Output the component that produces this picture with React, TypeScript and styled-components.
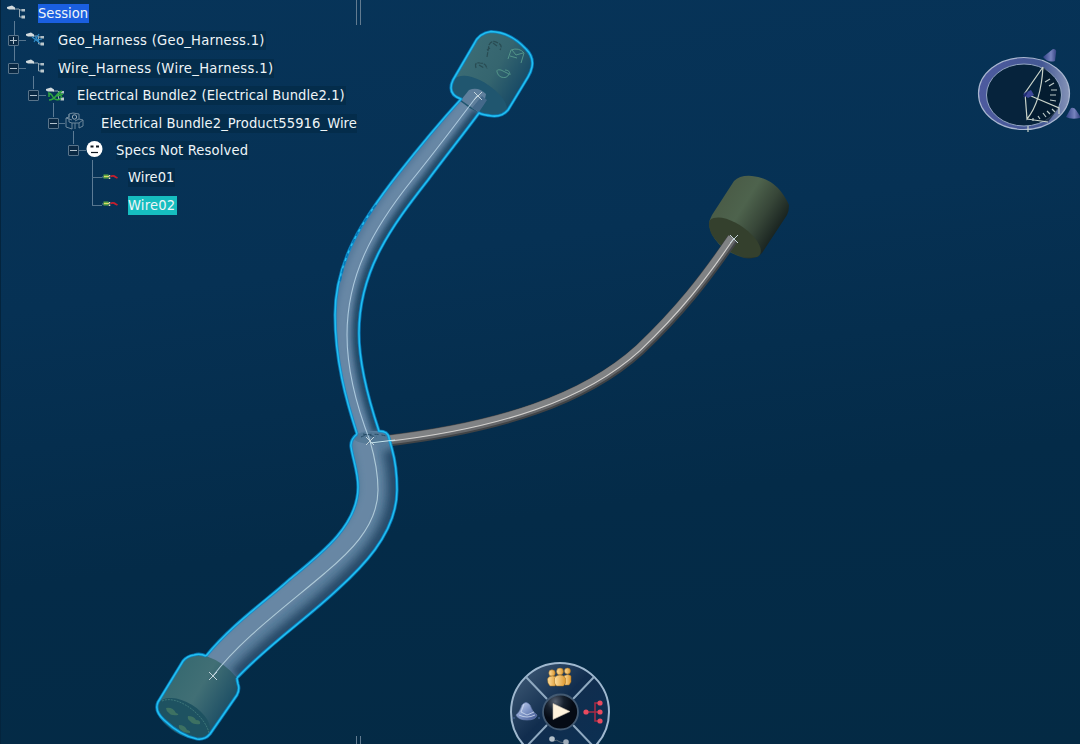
import React from "react";
import styled, { createGlobalStyle } from "styled-components";

const GlobalStyle = createGlobalStyle`
  body { margin: 0; background: #052c4a; overflow: hidden; }
`;

const Workspace = styled.main`
  position: relative;
  width: 1080px;
  height: 744px;
  overflow: hidden;
  background: linear-gradient(172deg, #073459 0%, #063154 35%, #042b48 66%, #042a44 100%);
  box-shadow: inset 1px 0 #04243d;
`;

const Scene = styled.svg`
  position: absolute;
  inset: 0;
  width: 1080px;
  height: 744px;
`;

const Tree = styled.ul`
  position: relative;
  width: 357px;
  margin: 0;
  padding: 0;
  list-style: none;
  overflow: hidden;
  font-family: "DejaVu Sans Condensed", "DejaVu Sans", sans-serif;
  font-stretch: condensed;
  font-size: 14.6px;
  color: #eef5f8;
`;

const Row = styled.li<{ $indent: number; $h: number }>`
  position: relative;
  display: flex;
  align-items: center;
  height: ${(p) => p.$h}px;
  padding-left: ${(p) => p.$indent}px;
  white-space: nowrap;
`;

const Toggle = styled.span`
  flex: none;
  box-sizing: border-box;
  display: grid;
  place-items: center;
  width: 11px;
  height: 11px;
  border: 1px solid #59748a;
  border-radius: 1px;
  background: #0a2944;
  svg { display: block; }
`;

const Dash = styled.span<{ $w: number }>`
  flex: none;
  width: ${(p) => p.$w}px;
  height: 1px;
  background: #55748d;
`;

const Stem = styled.span<{ $x: number; $top: number; $len: number }>`
  position: absolute;
  left: ${(p) => p.$x}px;
  top: ${(p) => p.$top}px;
  width: 1px;
  height: ${(p) => p.$len}px;
  background: #5c7b95;
`;

const IconSlot = styled.span<{ $gap: number }>`
  flex: none;
  display: flex;
  margin-right: ${(p) => p.$gap}px;
  svg { display: block; overflow: visible; }
`;

const Label = styled.span<{ $bg?: string; $w: number; $track: number }>`
  flex: none;
  box-sizing: border-box;
  width: ${(p) => p.$w}px;
  height: 19px;
  line-height: 17px;
  letter-spacing: ${(p) => p.$track}px;
  background: ${(p) => p.$bg ?? "rgba(3, 37, 62, 0.45)"};
`;

const Splitter = styled.div<{ $top: number; $h: number }>`
  position: absolute;
  left: 356px;
  top: ${(p) => p.$top}px;
  box-sizing: border-box;
  width: 5px;
  height: ${(p) => p.$h}px;
  border: solid #627b90;
  border-width: 0 1px;
`;

/* Silhouette edges and centre lines; edges are kept as segments so that they chain into one outline */
const upperLeftFrom = "357 434";
const upperLeft = "C346 400 335 360 335 315C335 262 362 220 398 174C420 146 440 122 461 99";
const upperRight = "C462 136 445 157 428 180C392 226 359 270 359 333C359 365 368 398 379 431";
const upperAxis = "M477 96C455 125 434 153 412 180C372 230 347 276 347 335C347 370 358 410 370 441";
const lowerLeft = "C232 624 266 601 290 579C322 553 358 525 358 487C358 472 353 460 351 447";
const lowerRight = "C396 463 397 477 397 490C397 535 358 571 337 590C305 620 268 645 237 678";
const lowerAxis = "M370 441C375 458 378 474 378 490C378 528 345 556 325 573C285 607 240 640 213 676";
const branch = "M384 441.500C500 428 585 400 640 350C680 312 705 280 733 239";

const topCap = "C455 97 451 93 451 88Q451 84 453 80L474 44Q479 33 491 31.500Q510 32 526 49Q534 57 532 67Q531 72 528 77L508 110Q502 117 492 116Q483 115 479 113";
const bottomCap = "Q200 653 194 655Q187 656 183 661L158 702Q154 711 164 720Q181 736 197 739Q205 740 210 734L237 695Q240 689 238 684Q237 680 237 678";

const upperBody = `M${upperLeftFrom}${upperLeft}${topCap}${upperRight}Z`;
const lowerBody = `M392 449${lowerRight}L206 656${lowerLeft}Q351 441 357 434Q364 430 379 431Q390 432 389 438Z`;
const outline = `M${upperLeftFrom}${upperLeft}${topCap}${upperRight}Q388 431 389 438L392 449${lowerRight}M206 656${bottomCap}M206 656${lowerLeft}Q350 440 357 434`;

const Cross = ({ x, y, r = 4 }: { x: number; y: number; r?: number }) => (
  <path d={`M${x - r} ${y - r}l${2 * r} ${2 * r}M${x + r} ${y - r}l${-2 * r} ${2 * r}`} stroke="#c3d3da" strokeWidth="1" />
);

function Harness() {
  return (
    <g fill="none">
      <path d="M752 176Q777 178 789 205Q789 211 787 215L762 253Q755 260 744 258Q714 249 709 225Q709 220 712 215L734 181Q740 175 752 176Z" fill="url(#green)" />
      <path d="M710 220C719 213 739 222 752 235C761 244 764 254 757 257C743 261 721 250 712 235C709 229 708 223 710 220Z" fill="#34402d" />
      <path d={branch} stroke="#404346" strokeWidth="11.500" transform="translate(-.3 -.3)" />
      <path d={branch} stroke="#65676a" strokeWidth="9" transform="translate(-.8 -.9)" />
      <path d={branch} stroke="#808284" strokeWidth="6.500" transform="translate(-1.500 -1.800)" />
      <path d={branch} stroke="#d3d2d0" strokeWidth="1.100" transform="translate(.3 .3)" />
      <Cross x={734} y={239} />

      <clipPath id="upClip"><path d={upperBody} /></clipPath>
      <clipPath id="lowClip"><path d={lowerBody} /></clipPath>
      <g clipPath="url(#upClip)">
        <path d={upperBody} fill="#56799a" />
        <path d={upperAxis} stroke="#6787a5" strokeWidth="13" transform="translate(-4 -1)" filter="url(#soft)" />
        <path d={`M479 113${upperRight}`} stroke="#234866" strokeWidth="13" filter="url(#soft)" />
      </g>
      <g clipPath="url(#lowClip)">
        <path d={lowerBody} fill="#5a7e9c" />
        <path d={lowerAxis} stroke="#6787a4" strokeWidth="20" transform="translate(-7 -4)" filter="url(#soft)" />
        <path d={`M392 449${lowerRight}`} stroke="#264a67" strokeWidth="19" filter="url(#soft3)" />
        <ellipse cx="372" cy="438" rx="18" ry="6" fill="#4d7390" opacity=".6" />
      </g>

      <path d={"M461 99" + topCap + "Q466 99 461 99Z"} fill="url(#teal)" />
      <path d="M453 80C462 70 483 79 496 91C508 102 511 113 501 116Q480 118 460 101Q449 90 453 80Z" fill="#20566f" />
      <path d="M461 100L469 90Q478 86 486 94L484 104L478 112Z" fill="#5f7f9c" />
      <path d="M479 112L487 100L482 96L472 108Z" fill="#44698a" />
      <path d={"M206 656" + bottomCap + "Q224 662 206 656Z"} fill="url(#teal2)" />
      <ellipse cx="183.500" cy="718.500" rx="29.500" ry="16" fill="#1e5261" transform="rotate(31 183.500 718.500)" />
      <path d="M162 701C177 694 205 715 209 733" stroke="#3d7679" strokeDasharray="2 1" />
      <g fill="#3d7162">
        <path d="M166 708q7-1 10 5q3 1 2 2q-7 1-9-2q-3-2-3-5Z" />
        <path d="M188 716q6 0 8 4q5 0 4 4q-7 1-10-3q-3-2-2-5Z" />
        <path d="M179 725q6 0 8 5q4 1 3 3q-7 0-9-3q-3-2-2-5Z" />
      </g>
      <path d="M487 57l2-12q3-6 9-2q5 2 2 7M493 43l4 3M487 50l3-2M476 68q-2-6 4-5q6 0 7 6M479 65l5 3" stroke="#294c53" strokeWidth="1.200" strokeDasharray="5 1" />
      <path d="M508 59l3-9q8-3 13 3l-3 10M512 50l4 5l7-2M510 56l7 2M497 72q-1-3 4-2l8 4q-2 5-8 3q-3-1-4-5ZM505 70q5 0 5 5" stroke="#539489" />

      <path d={outline} stroke="#078bd1" strokeWidth="3.200" opacity=".75" strokeLinejoin="round" />
      <path d={outline} stroke="#21c0f2" strokeWidth="1.500" strokeLinejoin="round" />
      <path d="M376 205Q353 235 344 265L340 282" stroke="#0879b7" strokeWidth="1.600" strokeDasharray="5 3" />
      <path d={upperAxis} stroke="#abc9dd" strokeWidth="1.100" />
      <path d={lowerAxis} stroke="#aecad8" strokeWidth="1.100" />
      <path d="M361 437q10-5 25-1M363 434l14 3" stroke="#264c67" strokeDasharray="4 3" />
      <path d="M370 443L395 440" stroke="#c5e5ef" />
      <Cross x={370} y={441} />
      <Cross x={478} y={96} />
      <Cross x={213} y={676} />
    </g>
  );
}

function Compass() {
  return (
    <g fill="none">
      <ellipse cx="1024" cy="93.500" rx="45.500" ry="36" fill="url(#ring)" stroke="#a9b6d0" strokeWidth="1.200" />
      <ellipse cx="1024" cy="95" rx="37.500" ry="31" fill="#06233c" stroke="#93a6c2" />
      <path d="M1043 67Q1058 78 1060 94L1058 109L1048 122L1027 119L1040 95Z" fill="#041a2b" opacity=".7" />
      <path d="M1043 67L1025 93L1027 119Q1041 102 1043 67M1031 96L1059 108V114M1027 119L1048 122M1028 126V132" stroke="#c9d3c9" strokeWidth="1.200" />
      <path d="M1045 82l5-3M1049 86l5-3M1051 90h6M1050 95h6M1050 100l6 1M1038 116l2 3M1043 113l3 4M1047 111l3 3M1052 109l3 3M1033 118v3" stroke="#bccac8" strokeWidth="1.200" />
      <path d="M1023 94l8-4 3 5-6 3Z" fill="#3d489a" />
      <path d="M1024 97l3-5" stroke="#1f2b72" strokeWidth="2" />
      <path d="M1043 57l10-8q4 0 3 4l-1 8q-7 2-12-4Z" fill="url(#cone)" />
      <path d="M1066 117l5-9q3-1 5 2l4 6v2q-9 2-14-1Z" fill="url(#cone)" />
    </g>
  );
}

const People = () => (
  <g fill="url(#gold)" stroke="#a36f1d" strokeWidth=".5">
    <circle cx="567.500" cy="671" r="3" /><path d="M564 676q4-3 7 0v6l-2 3h-4Z" />
    <circle cx="552" cy="673" r="3.200" /><path d="M547.500 679q1-3 5-3t4.500 3v4l-2 3h-5l-2-3Z" />
    <circle cx="560" cy="671.500" r="3.400" /><path d="M554.500 678q2-3 5.500-3t5.500 3v5l-2 3h-7l-2-3Z" />
  </g>
);

function Wheel() {
  return (
    <g>
      <circle cx="560" cy="712" r="49" fill="url(#disc)" stroke="#9fb8cf" strokeWidth="2" />
      <path d="M526 677L547 699M594 677L573 699M526 747L547 725M594 747L573 725" stroke="#8fa9c0" strokeWidth="2" />
      <circle cx="560.500" cy="712" r="17.500" fill="url(#hub)" stroke="#435a72" strokeWidth="1.800" />
      <path d="M553 703.500L570 711.500L553 719.500Z" fill="#fff3dd" stroke="#c4b8a7" strokeWidth=".6" />
      <People />
      <path d="M586 712h14M600 703h-5v18h5" fill="none" stroke="#a92b44" strokeWidth="1.500" />
      <g fill="#e84a5e"><circle cx="586" cy="712" r="2.600" /><circle cx="600" cy="703" r="2.600" /><circle cx="600" cy="712" r="2.600" /><circle cx="600" cy="721" r="2.600" /></g>
      <path d="M516 715q4-3 6-10q4-5 8 0q2 7 7 10q-1 5-10 5t-11-5Z" fill="url(#boat)" stroke="#6e83b6" strokeWidth=".6" />
      <path d="M524 704l-3 8 6 3 7-3M519 715q8 4 16 0" fill="none" stroke="#cfdcf0" strokeWidth=".8" />
      <path d="M513 718h2M538 718h2" stroke="#4869a0" />
      <path d="M553 741q4-2 7 1l5 1" fill="none" stroke="#526575" />
      <circle cx="552" cy="739" r="2.800" fill="#b4c0ca" /><circle cx="566" cy="742" r="2.800" fill="#9facb9" />
    </g>
  );
}

const Defs = () => (
  <defs>
    <filter id="soft" x="-20%" y="-20%" width="140%" height="140%"><feGaussianBlur stdDeviation="2.500" /></filter>
    <filter id="soft3" x="-20%" y="-20%" width="140%" height="140%"><feGaussianBlur stdDeviation="4" /></filter>
    <linearGradient id="green" gradientUnits="userSpaceOnUse" x1="723" y1="195" x2="779" y2="230"><stop stopColor="#4a5c47" /><stop offset=".35" stopColor="#4e634d" /><stop offset=".68" stopColor="#374638" /><stop offset="1" stopColor="#18221f" /></linearGradient>
    <linearGradient id="teal" gradientUnits="userSpaceOnUse" x1="465" y1="58" x2="520" y2="92"><stop stopColor="#3b6b74" /><stop offset=".5" stopColor="#35656f" /><stop offset="1" stopColor="#174965" /></linearGradient>
    <linearGradient id="teal2" gradientUnits="userSpaceOnUse" x1="172" y1="680" x2="226" y2="712"><stop stopColor="#386a71" /><stop offset=".45" stopColor="#416f75" /><stop offset="1" stopColor="#1e4f65" /></linearGradient>
    <linearGradient id="ring"><stop stopColor="#4d5a9f" /><stop offset=".7" stopColor="#445894" /><stop offset="1" stopColor="#8694b8" /></linearGradient>
    <linearGradient id="cone"><stop stopColor="#2f4086" /><stop offset=".6" stopColor="#7783be" /><stop offset="1" stopColor="#364484" /></linearGradient>
    <linearGradient id="disc" x1="0" y1="0" x2="1" y2="1"><stop stopColor="#46617c" /><stop offset=".45" stopColor="#112d4e" /><stop offset="1" stopColor="#0a3053" /></linearGradient>
    <radialGradient id="hub" cx=".35" cy=".2"><stop stopColor="#586272" /><stop offset=".5" stopColor="#17212e" /><stop offset="1" stopColor="#050b15" /></radialGradient>
    <linearGradient id="gold"><stop stopColor="#ffe0a0" /><stop offset="1" stopColor="#dc9730" /></linearGradient>
    <linearGradient id="boat" x1="0" y1="0" x2="1" y2="1"><stop stopColor="#cbd8f4" /><stop offset=".5" stopColor="#7f95c6" /><stop offset="1" stopColor="#3c528f" /></linearGradient>
  </defs>
);

type Kind = "node" | "geo" | "bundle" | "product" | "face" | "wire";

function TreeIcon({ kind }: { kind: Kind }) {
  if (kind === "face")
    return (
      <svg width="17" height="19" viewBox="0 0 17 19"><circle cx="8.500" cy="8" r="8" fill="#fff" /><path d="M4.500 5.500h3M10 5.500h3" stroke="#101820" strokeWidth="2" /><path d="M5 11.500h7" stroke="#101820" strokeWidth="1.200" /></svg>
    );
  if (kind === "wire")
    return (
      <svg width="17" height="10" viewBox="0 0 17 10"><path d="M0 4h2" stroke="#688d9d" /><rect x="1.500" y="1.500" width="5" height="4" fill="#5fa843" /><path d="M2 3.500h5" stroke="#d9d96b" /><path d="M7.500 2v4" stroke="#e6dfb4" strokeDasharray="1.500 1" strokeWidth="1.500" /><path d="M8.500 3.500q3-1.500 5 .5l2 1" fill="none" stroke="#c81f2d" strokeWidth="1.800" /></svg>
    );
  if (kind === "product")
    return (
      <svg width="19" height="22" viewBox="0 0 19 22" fill="none" stroke="#6d879b"><path d="M4 2l4-1 6 1v5l4 1v6l-4 2v-5H7v6l-6-2V6l3-1ZM4 2v8l3 1M1 6l6 2M14 7l-4 2M14 11l4-3M10 11v6" /><circle cx="9.500" cy="5" r="2.200" stroke="#9aabb8" /></svg>
    );
  return (
    <svg width="19" height="18" viewBox="0 0 19 18">
      <path d="M7 4h5M12.500 4v8H15M12 5h5" fill="none" stroke="#92a5b1" />
      <path d="M0 2l5-1.500 3 2v2H2L0 3.500Z" fill="#d3dbde" />
      <rect x="14.500" y="4" width="3.500" height="2.500" fill="#aebdc5" /><rect x="14.500" y="10.500" width="3.500" height="3" fill="#bdc9cd" />
      {kind === "geo" && <path d="M6 5l8 6M13 2L8 10M9 4l4 6M11 8l5-1" fill="none" stroke="#2f8cc8" strokeWidth="1.200" />}
      {kind === "bundle" && <path d="M2 6q3 0 5 4t8 2M3 13q4 0 7-4t6-5M3 7v3M13 5l3 6M11 9l6-2" fill="none" stroke="#2fa63f" strokeWidth="1.500" />}
    </svg>
  );
}

interface Item {
  label: string;
  kind: Kind;
  indent: number;
  h: number;
  dash: number;
  gap: number;
  width: number;
  track?: number;
  toggle?: "+" | "-";
  bg?: string;
  stem?: [number, number, number];
}

const items: Item[] = [
  { label: "Session", kind: "node", indent: 7, h: 27, dash: 0, gap: 12, width: 51, bg: "#1a5fe0", stem: [14, 21, 40] },
  { label: "Geo_Harness (Geo_Harness.1)", kind: "geo", indent: 8, h: 27, toggle: "+", dash: 7, gap: 13, width: 208, track: 0.29 },
  { label: "Wire_Harness (Wire_Harness.1)", kind: "node", indent: 8, h: 28, toggle: "-", dash: 7, gap: 13, width: 216, track: 0.35, stem: [33, 22, 13] },
  { label: "Electrical Bundle2 (Electrical Bundle2.1)", kind: "bundle", indent: 28, h: 27, toggle: "-", dash: 7, gap: 12, width: 269, track: 0.09, stem: [53, 21, 14] },
  { label: "Electrical Bundle2_Product55916_Wire", kind: "product", indent: 48, h: 28, toggle: "-", dash: 6, gap: 17, width: 257, track: 0.09, stem: [73, 22, 13] },
  { label: "Specs Not Resolved", kind: "face", indent: 68, h: 27, toggle: "-", dash: 7, gap: 13, width: 133, track: 0.16, stem: [92, 23, 45] },
  { label: "Wire01", kind: "wire", indent: 92, h: 27, dash: 10, gap: 9, width: 47, track: 0.05 },
  { label: "Wire02", kind: "wire", indent: 92, h: 28, dash: 10, gap: 9, width: 49, track: 0.2, bg: "#16bdbf", stem: [92, 0, 13] },
];

export default function App() {
  return (
    <Workspace>
      <GlobalStyle />
      <Scene viewBox="0 0 1080 744">
        <Defs />
        <Harness />
        <Compass />
        <Wheel />
      </Scene>
      <Tree>
        {items.map((it) => (
          <Row key={it.label} $indent={it.indent} $h={it.h}>
            {it.stem && <Stem $x={it.stem[0]} $top={it.stem[1]} $len={it.stem[2]} />}
            {it.toggle && (
              <Toggle>
                <svg width="7" height="7" viewBox="0 0 7 7"><path d={it.toggle === "+" ? "M0 3.500h7M3.500 0v7" : "M0 3.500h7"} stroke="#b3c2cd" /></svg>
              </Toggle>
            )}
            <Dash $w={it.dash} />
            <IconSlot $gap={it.gap}><TreeIcon kind={it.kind} /></IconSlot>
            <Label $bg={it.bg} $w={it.width} $track={it.track ?? 0}>{it.label}</Label>
          </Row>
        ))}
      </Tree>
      <Splitter $top={0} $h={25} />
      <Splitter $top={736} $h={8} />
    </Workspace>
  );
}
